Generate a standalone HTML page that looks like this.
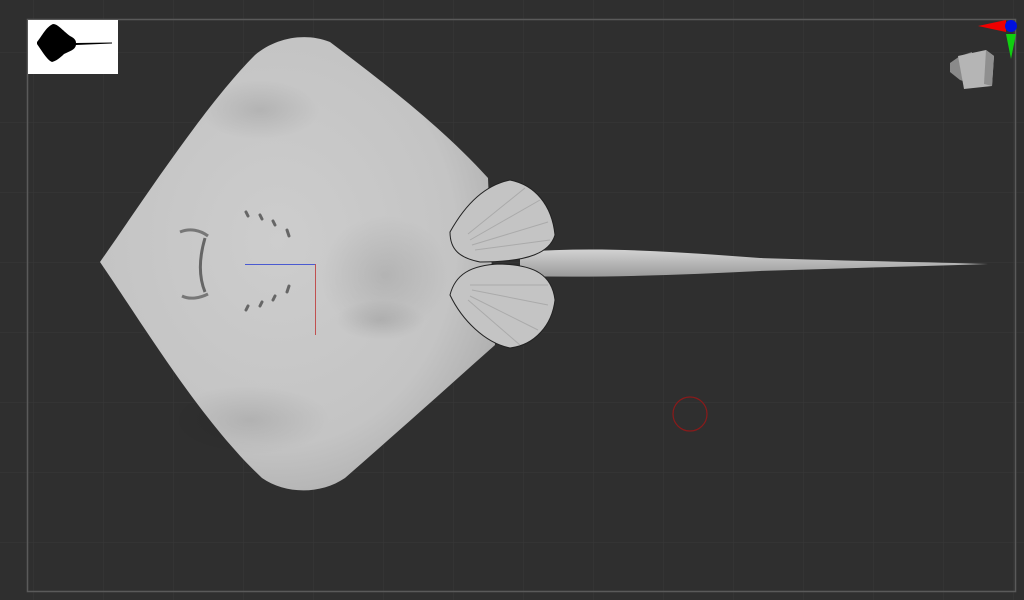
<!DOCTYPE html>
<html><head><meta charset="utf-8"><style>
html,body{margin:0;padding:0;background:#2f2f2f;width:1024px;height:600px;overflow:hidden}
svg{display:block}
</style></head><body>
<svg width="1024" height="600" viewBox="0 0 1024 600" xmlns="http://www.w3.org/2000/svg">
<defs>
<pattern id="grid" width="70" height="70" patternUnits="userSpaceOnUse" x="33" y="52">
<path d="M0 0H70M0 0V70" stroke="#383838" stroke-width="1" fill="none"/>
</pattern>
<radialGradient id="body" cx="0.45" cy="0.45" r="0.6">
<stop offset="0" stop-color="#cdcdcd"/>
<stop offset="0.75" stop-color="#c4c4c4"/>
<stop offset="1" stop-color="#b0b0b0"/>
</radialGradient>
<linearGradient id="tail" x1="0" y1="0" x2="0" y2="1">
<stop offset="0" stop-color="#d2d2d2"/><stop offset="1" stop-color="#9a9a9a"/>
</linearGradient>
<radialGradient id="shade" cx="0.5" cy="0.5" r="0.5">
<stop offset="0" stop-color="#000" stop-opacity="0.1"/><stop offset="1" stop-color="#000" stop-opacity="0"/>
</radialGradient>
</defs>
<rect width="1024" height="600" fill="#2f2f2f"/>
<rect width="1024" height="600" fill="url(#grid)"/>
<rect x="27.5" y="19.5" width="988" height="572" fill="none" stroke="#5a5a5a" stroke-width="1.5"/>
<rect x="28" y="20" width="90" height="54" fill="#fff"/>
<path d="M37 42 C42 36 46 27 53 24 C58 24 62 30 70 36 C74 38 76 40 76 43 L112 42.5 L112 43.5 L76 45 C75 50 70 51 64 54 C60 58 56 61 52 62 C47 60 42 51 37 44 Z" fill="#000"/>
<polygon points="978,26 1006,20 1006,32" fill="#e00"/>
<circle cx="1011" cy="26" r="6" fill="#0010e0"/>
<polygon points="1006,34 1016,34 1011,59" fill="#10d010"/>
<polygon points="960,56 972,52 972,84 960,80 950,72 950,63" fill="#8a8a8a"/>
<polygon points="958,56 986,50 994,56 992,86 964,89" fill="#b5b5b5"/>
<polygon points="986,50 994,56 992,86 984,84" fill="#8f8f8f"/>
<path d="M520 252 C600 246 680 252 760 258 C850 261 930 262 988 264 C930 266 850 268 760 271 C680 275 600 278 520 276 Z" fill="url(#tail)"/>
<path d="M100 262 C140 205 205 105 255 55 C275 38 305 32 330 42 C380 80 440 125 488 178 L495 345 C450 385 400 430 345 478 C320 495 285 494 262 478 C200 420 140 320 100 262 Z" fill="url(#body)"/>
<ellipse cx="385" cy="275" rx="65" ry="60" fill="url(#shade)"/>
<ellipse cx="380" cy="320" rx="45" ry="20" fill="url(#shade)"/>
<ellipse cx="250" cy="420" rx="80" ry="35" fill="url(#shade)"/>
<ellipse cx="260" cy="110" rx="60" ry="30" fill="url(#shade)"/>
<path d="M450 232 C465 205 485 185 510 180 C535 185 552 205 555 235 C550 252 530 262 480 262 C460 258 450 250 450 232 Z" fill="#c4c4c4" stroke="#222" stroke-width="1"/>
<path d="M450 295 C455 275 470 265 500 264 C535 265 552 275 555 300 C552 325 535 345 510 348 C485 343 462 320 450 295 Z" fill="#c4c4c4" stroke="#222" stroke-width="1"/>
<g stroke="#aaa" stroke-width="1" fill="none">
<path d="M470 240 L540 200M472 245 L548 222M475 250 L550 240M468 234 L525 188"/>
<path d="M470 285 L548 285M472 290 L548 305M470 296 L538 330M468 300 L520 345"/>
</g>
<path d="M205 238 C200 255 198 275 205 292" stroke="#666" stroke-width="3" fill="none"/>
<path d="M180 232 C190 228 200 230 208 236" stroke="#777" stroke-width="3" fill="none"/>
<path d="M182 296 C190 300 200 298 208 294" stroke="#777" stroke-width="3" fill="none"/>
<g stroke="#666" stroke-width="3" fill="none" stroke-linecap="round">
<path d="M246 212 l2 4M260 215 l2 4M273 221 l2 4M287 230 l2 6"/>
<path d="M246 310 l2 -4M260 306 l2 -4M273 300 l2 -4M287 292 l2 -6"/>
</g>
<line x1="245" y1="264.5" x2="316" y2="264.5" stroke="#4a5ad0" stroke-width="1"/>
<line x1="315.5" y1="264" x2="315.5" y2="335" stroke="#c05050" stroke-width="1"/>
<circle cx="690" cy="414" r="17" fill="none" stroke="#8a1a1a" stroke-width="1.2"/>
</svg>
</body></html>
